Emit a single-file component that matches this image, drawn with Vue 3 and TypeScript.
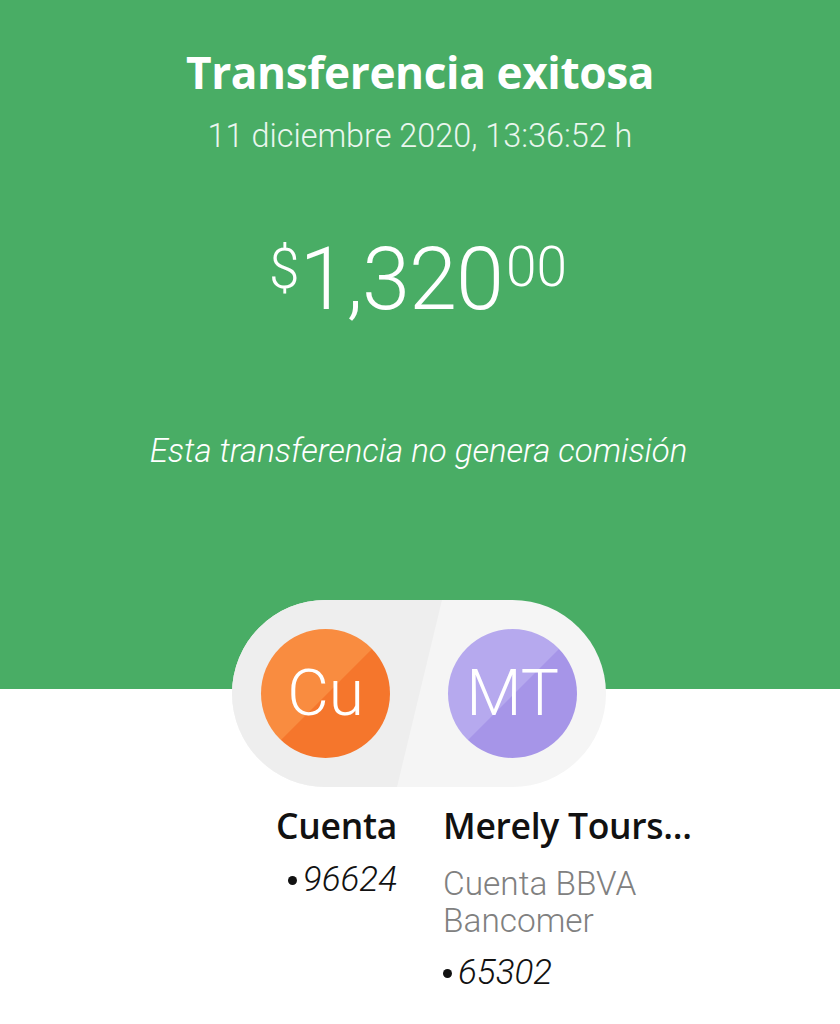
<script setup lang="ts">
interface Party {
  initials: string;
  tone: string;
  name: string;
  bank?: string[];
  account: string;
}

const origin: Party = { initials: "Cu", tone: "orange", name: "Cuenta", account: "96624" };
const target: Party = {
  initials: "MT",
  tone: "violet",
  name: "Merely Tours...",
  bank: ["Cuenta BBVA", "Bancomer"],
  account: "65302",
};
const parties = [origin, target];
</script>

<template>
  <div class="screen">
    <header class="hero">
      <h1 class="title">Transferencia exitosa</h1>
      <p class="date">11 diciembre 2020, 13:36:52 h</p>
      <div class="amount">
        <span class="sup currency">$</span>
        <span class="whole">1,320</span>
        <span class="sup cents">00</span>
      </div>
      <p class="note">Esta transferencia no genera comisión</p>
    </header>

    <div class="pill">
      <div class="pill-shade"></div>
      <div
        v-for="party in parties"
        :key="party.initials"
        class="avatar"
        :class="party.tone"
      >
        {{ party.initials }}
      </div>
    </div>

    <section class="details">
      <div class="col left">
        <div class="name">{{ origin.name }}</div>
        <div class="account"><i class="dot"></i>{{ origin.account }}</div>
      </div>
      <div class="col right">
        <div class="name">{{ target.name }}</div>
        <div class="bank">
          <div v-for="line in target.bank" :key="line">{{ line }}</div>
        </div>
        <div class="account"><i class="dot"></i>{{ target.account }}</div>
      </div>
    </section>
  </div>
</template>

<style scoped>
.screen {
  width: 840px;
  height: 1024px;
  overflow: hidden;
  background: #fff;
  font-family: Roboto, "Liberation Sans", sans-serif;
}
.hero {
  height: 689px;
  box-sizing: border-box;
  padding-top: 48px;
  background: #49ad65;
  color: #fff;
  text-align: center;
}
.title {
  margin: 0;
  font-family: "Open Sans", Roboto, sans-serif;
  font-size: 44.2px;
  line-height: 48px;
  font-weight: 700;
  letter-spacing: -0.4px;
}
.date {
  margin: 20px 0 0;
  font-size: 32.4px;
  line-height: 40px;
  font-weight: 300;
  color: #eaf6ee;
}
.amount {
  display: flex;
  justify-content: center;
  align-items: flex-start;
  margin-top: 76px;
  height: 96px;
  font-weight: 300;
}
.whole {
  margin: 0 3px 0 0;
  font-size: 86.5px;
  line-height: 96px;
  letter-spacing: -1px;
}
.sup {
  font-size: 55px;
  line-height: 58px;
  margin-top: 8px;
}
.cents {
  margin-top: 6px;
  margin-right: 4px;
}
.note {
  margin: 103px 0 0;
  padding-right: 3px;
  font-size: 33px;
  line-height: 40px;
  font-weight: 300;
  font-style: italic;
}
.pill {
  position: relative;
  display: flex;
  justify-content: space-between;
  align-items: center;
  box-sizing: border-box;
  width: 374px;
  height: 187px;
  margin: -89px 0 0 232px;
  padding: 0 29px;
  border-radius: 94px;
  background: #f5f5f5;
  overflow: hidden;
}
.pill-shade {
  position: absolute;
  inset: 0;
  background: #eeeeee;
  clip-path: polygon(0 0, 210px 0, 165px 100%, 0 100%);
}
.avatar {
  position: relative;
  width: 129px;
  height: 129px;
  border-radius: 50%;
  display: flex;
  align-items: center;
  justify-content: center;
  color: #fff;
  font-size: 64px;
  font-weight: 300;
}
.orange {
  background: linear-gradient(135deg, #f98c40 50.5%, #f5762c 51%);
}
.violet {
  background: linear-gradient(135deg, #b6a9ee 50.5%, #a695e8 51%);
}
.details {
  display: flex;
  gap: 46px;
  margin-top: 16px;
  padding-left: 150px;
  color: #111;
}
.col {
  display: flex;
  flex-direction: column;
}
.left {
  width: 247px;
  align-items: flex-end;
}
.name {
  font-family: "Open Sans", Roboto, sans-serif;
  font-size: 35.5px;
  line-height: 44px;
  font-weight: 600;
  letter-spacing: -0.3px;
  white-space: nowrap;
}
.bank {
  margin-top: 18px;
  font-size: 33.4px;
  line-height: 37px;
  font-weight: 300;
  color: #808080;
}
.account {
  display: flex;
  align-items: center;
  margin-top: 13px;
  font-size: 35px;
  line-height: 40px;
  font-weight: 300;
  font-style: italic;
}
.right .account {
  margin-top: 14px;
}
.dot {
  width: 9px;
  height: 9px;
  margin-right: 6px;
  border-radius: 50%;
  background: #111;
}
</style>
